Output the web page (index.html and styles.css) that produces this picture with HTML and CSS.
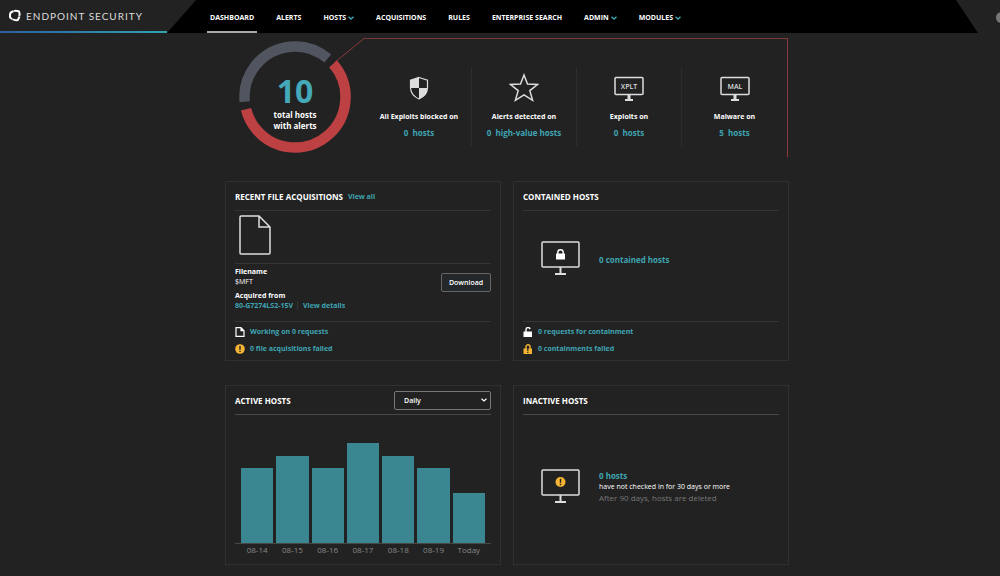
FILE: index.html
```html
<!DOCTYPE html>
<html lang="en">
<head>
  <meta charset="UTF-8" />
  <meta name="viewport" content="width=device-width, initial-scale=1" />
  <title>Endpoint Security - Dashboard</title>
  <link rel="stylesheet" href="styles.css">
</head>
<body>
  <header class="topbar">
    <a href="#" class="brand">
      <svg class="brand-logo" viewBox="0 0 12 13" width="12" height="13">
        <path d="M1.6 3.6 Q5.5 0.6 10 2.4 Q11.6 6.6 8.8 11 Q4 11.8 1.2 8.6 Q0.6 6 1.6 3.6 Z" fill="none" stroke="#fff" stroke-width="2" />
        <path d="M4.2 1 L5.4 3.2 M11.8 7.2 L9.4 7.4 M2.6 11.4 L3.6 9.4" stroke="#222" stroke-width="0.6" />
      </svg>
      <span>ENDPOINT SECURITY</span>
    </a>
    <nav class="menu">
      <a href="#" class="active">DASHBOARD</a>
      <a href="#">ALERTS</a>
      <a href="#">HOSTS <svg class="chevron" viewBox="0 0 6 4"><path d="M0.5 0.8 L3 3 L5.5 0.8" /></svg></a>
      <a href="#">ACQUISITIONS</a>
      <a href="#">RULES</a>
      <a href="#">ENTERPRISE SEARCH</a>
      <a href="#">ADMIN <svg class="chevron" viewBox="0 0 6 4"><path d="M0.5 0.8 L3 3 L5.5 0.8" /></svg></a>
      <a href="#">MODULES <svg class="chevron" viewBox="0 0 6 4"><path d="M0.5 0.8 L3 3 L5.5 0.8" /></svg></a>
    </nav>
    <button type="button" class="user" aria-label="User"></button>
  </header>

  <main>
    <!-- Alert summary -->
    <section class="summary">
      <div class="donut">
        <svg viewBox="0 0 125 119" width="125" height="119">
          <path class="leader" d="M95 25 L125 0.5" />
          <circle class="ring ring-clean" cx="56" cy="59" r="50.5" pathLength="360" stroke-dasharray="136 224" transform="rotate(174.5 56 59)" />
          <circle class="ring ring-alert" cx="56" cy="59" r="50.5" pathLength="360" stroke-dasharray="207 153" transform="rotate(-41 56 59)" />
        </svg>
        <div class="donut-text">
          <strong>10</strong>
          <span>total hosts<br>with alerts</span>
        </div>
      </div>
      <div class="stats">
        <div class="stat">
          <svg class="stat-icon" viewBox="0 0 30 30">
            <path d="M15 4.5 L23.5 7.2 V15 Q23 22.5 15 26 Q7 22.5 6.5 15 V7.2 Z" fill="#222" stroke="#ddd" stroke-width="1.2" />
            <path d="M15 4.5 V15 H6.5 V7.2 Z M15 15 H23.5 Q23 22.5 15 26 Z" fill="#ddd" />
          </svg>
          <h3>All Exploits blocked on</h3>
          <a href="#">0&nbsp; hosts</a>
        </div>
        <div class="stat">
          <svg class="stat-icon" viewBox="0 0 30 30">
            <path class="line" d="M15 2 L18.5 11 L28.5 11.5 L20.8 17.6 L23.6 27.3 L15 21.8 L6.4 27.3 L9.2 17.6 L1.5 11.5 L11.5 11 Z" />
          </svg>
          <h3>Alerts detected on</h3>
          <a href="#">0&nbsp; high-value hosts</a>
        </div>
        <div class="stat">
          <svg class="stat-icon" viewBox="0 0 30 30">
            <rect class="line" x="1" y="4.5" width="28" height="17" rx="1" />
            <path d="M13.5 22 H16.5 V26 H19 V28 H11 V26 H13.5 Z" fill="#ddd" />
            <text x="15" y="15.5">XPLT</text>
          </svg>
          <h3>Exploits on</h3>
          <a href="#">0&nbsp; hosts</a>
        </div>
        <div class="stat">
          <svg class="stat-icon" viewBox="0 0 30 30">
            <rect class="line" x="1" y="4.5" width="28" height="17" rx="1" />
            <path d="M13.5 22 H16.5 V26 H19 V28 H11 V26 H13.5 Z" fill="#ddd" />
            <text x="15" y="15.5">MAL</text>
          </svg>
          <h3>Malware on</h3>
          <a href="#">5&nbsp; hosts</a>
        </div>
      </div>
    </section>

    <section class="cards">
      <article class="card">
        <div class="card-head">
          <h2>RECENT FILE ACQUISITIONS</h2>
          <a href="#">View all</a>
        </div>
        <div class="file">
          <svg viewBox="0 0 32 40" width="32" height="40">
            <path class="line" d="M2 1 H20 L31 12 V38 Q31 39 30 39 H2 Q1 39 1 38 V2 Q1 1 2 1 Z M20 1 V12 H31" />
          </svg>
        </div>
        <div class="file-info">
          <dl>
            <dt>Filename</dt>
            <dd>$MFT</dd>
            <dt>Acquired from</dt>
            <dd class="links"><a href="#">80-G7274LS2-15V</a><a href="#">View details</a></dd>
          </dl>
          <button type="button" class="download">Download</button>
        </div>
        <ul class="status">
          <li>
            <svg viewBox="0 0 10 10"><path d="M1 0.7 H6 L9 3.7 V9.3 H1 Z M6 0.7 V3.7 H9" fill="none" stroke="#fff" stroke-width="1.2" /></svg>
            <a href="#">Working on 0 requests</a>
          </li>
          <li>
            <svg viewBox="0 0 10 10"><circle cx="5" cy="5" r="4.8" fill="#f5b431" /><path d="M5 2 V5.8 M5 6.8 V8" stroke="#222" stroke-width="1.4" /></svg>
            <a href="#">0 file acquisitions failed</a>
          </li>
        </ul>
      </article>

      <article class="card">
        <div class="card-head">
          <h2>CONTAINED HOSTS</h2>
        </div>
        <div class="host-info contained">
          <svg class="monitor" viewBox="0 0 40 36">
            <rect class="line" x="1" y="1" width="37" height="25" rx="1" />
            <path d="M18.5 26 H20.5 V32 H25 V34 H14 V32 H18.5 Z" fill="#ddd" />
            <path d="M16.8 13 V11.5 A2.7 2.7 0 0 1 22.2 11.5 V13" fill="none" stroke="#fff" stroke-width="1.4" />
            <rect x="15" y="12.5" width="9" height="6" rx="0.5" fill="#fff" />
          </svg>
          <a href="#">0 contained hosts</a>
        </div>
        <ul class="status">
          <li>
            <svg viewBox="0 0 10 10"><path d="M3 5 V2.8 A2 2 0 0 1 7 2.2" fill="none" stroke="#fff" stroke-width="1.4" /><rect x="0.5" y="4.5" width="8.5" height="5.5" fill="#fff" /></svg>
            <a href="#">0 requests for containment</a>
          </li>
          <li>
            <svg viewBox="0 0 10 10"><path d="M3 5 V2.8 A2 2 0 0 1 7 2.8 V5" fill="none" stroke="#f5b431" stroke-width="1.4" /><rect x="0.5" y="4.5" width="8.5" height="5.5" fill="#f5b431" /><path d="M4.8 4 V7.2 M4.8 8 V9" stroke="#222" stroke-width="1.2" /></svg>
            <a href="#">0 containments failed</a>
          </li>
        </ul>
      </article>

      <article class="card">
        <div class="card-head solid">
          <h2><label for="period">ACTIVE HOSTS</label></h2>
          <select id="period">
            <option>Daily</option>
            <option>Weekly</option>
            <option>Monthly</option>
          </select>
        </div>
        <div class="chart">
          <div class="bars">
            <div class="bar" style="height: 75%"></div>
            <div class="bar" style="height: 87%"></div>
            <div class="bar" style="height: 75%"></div>
            <div class="bar" style="height: 100%"></div>
            <div class="bar" style="height: 87%"></div>
            <div class="bar" style="height: 75%"></div>
            <div class="bar" style="height: 50%"></div>
          </div>
          <div class="days">
            <span>08-14</span>
            <span>08-15</span>
            <span>08-16</span>
            <span>08-17</span>
            <span>08-18</span>
            <span>08-19</span>
            <span>Today</span>
          </div>
        </div>
      </article>

      <article class="card">
        <div class="card-head solid">
          <h2>INACTIVE HOSTS</h2>
        </div>
        <div class="host-info">
          <svg class="monitor" viewBox="0 0 40 36">
            <rect class="line" x="1" y="1" width="37" height="25" rx="1" />
            <path d="M18.5 26 H20.5 V32 H25 V34 H14 V32 H18.5 Z" fill="#ddd" />
            <circle cx="19.5" cy="13" r="5" fill="#f5b431" />
            <path d="M19.5 9.8 V13.8 M19.5 14.8 V16.2" stroke="#222" stroke-width="1.4" />
          </svg>
          <div>
            <a href="#">0 hosts</a>
            <p>have not checked in for 30 days or more</p>
            <p class="muted">After 90 days, hosts are deleted</p>
          </div>
        </div>
      </article>
    </section>
  </main>
</body>
</html>
```
FILE: styles.css
```css
* {
  margin: 0;
  padding: 0;
  box-sizing: border-box;
}
body {
  font-family: "Open Sans", "Noto Sans", sans-serif;
  font-size: 7px;
  background: #222;
  color: #fff;
  overflow-x: hidden;
}
a {
  color: #3fa5b3;
  font-weight: 700;
  text-decoration: none;
}
svg {
  display: block;
}
.line {
  fill: none;
  stroke: #ddd;
  stroke-width: 1.5;
}

/* Top bar */
.topbar {
  position: relative;
  display: flex;
  height: 33px;
  padding-right: 22px;
  overflow: hidden;
}
.brand {
  display: flex;
  align-items: center;
  gap: 5px;
  width: 167px;
  padding-left: 9px;
  color: #ddd;
  font-family: Lato, sans-serif;
  font-size: 10px;
  font-weight: 400;
  letter-spacing: 1px;
  border-bottom: 2px solid;
  border-image: linear-gradient(to right, #2c5f9e, #30a3b3) 1;
}
.menu {
  flex: 1;
  display: flex;
  gap: 16px;
  padding-left: 40px;
  background: #000;
  clip-path: polygon(29px 0, calc(100% - 22px) 0, 100% 100%, 0 100%);
}
.menu a {
  display: flex;
  align-items: center;
  gap: 2px;
  padding: 4px 3px 0;
  border-bottom: 2px solid transparent;
  color: #fff;
  white-space: nowrap;
}
.menu a.active {
  border-bottom-color: #aaa;
}
.chevron {
  width: 6px;
  height: 4px;
  fill: none;
  stroke: #3fa5b3;
  stroke-width: 1.5;
}
.user {
  position: absolute;
  top: 12px;
  right: -7px;
  width: 11px;
  height: 11px;
  border: none;
  border-radius: 50%;
  background: #777;
}

main {
  max-width: 578px;
  margin: 0 auto;
  padding-left: 14px;
}

/* Summary */
.summary {
  display: flex;
  padding: 5px 1px 0 14px;
}
.donut {
  position: relative;
}
.ring {
  fill: none;
  stroke-width: 10.5;
}
.ring-clean {
  stroke: #50555f;
}
.ring-alert {
  stroke: #bd4043;
}
.leader {
  fill: none;
  stroke: #8a3b39;
}
.donut-text {
  position: absolute;
  top: 34px;
  left: 0;
  width: 112px;
  text-align: center;
}
.donut-text strong {
  display: block;
  color: #44a9b8;
  font-size: 32px;
  line-height: 37px;
}
.donut-text span {
  display: block;
  font-size: 8px;
  font-weight: 700;
  line-height: 11px;
}
.stats {
  flex: 1;
  display: grid;
  grid-template-columns: repeat(4, 1fr);
  padding: 28px 0 11px 3px;
  border-top: 1px solid #7c3836;
  border-right: 1px solid #8a3b39;
}
.stat {
  padding-top: 6px;
  text-align: center;
  border-right: 1px solid #2d2d2d;
}
.stat:last-child {
  border-right: none;
}
.stat-icon {
  width: 30px;
  height: 30px;
  margin: 0 auto 8px;
}
.stat-icon text {
  fill: #ddd;
  font-size: 7px;
  font-weight: 600;
  text-anchor: middle;
}
.stat h3 {
  font-size: 7px;
  line-height: 12px;
  white-space: nowrap;
}
.stat a {
  display: block;
  margin-top: 3px;
  font-size: 8px;
  line-height: 14px;
}

/* Cards */
.cards {
  display: grid;
  grid-template-columns: 1fr 1fr;
  gap: 24px 12px;
  padding: 24px 0 11px;
}
.card {
  display: flex;
  flex-direction: column;
  min-height: 180px;
  padding: 0 9px;
  border: 1px solid #303030;
}
.card-head {
  display: flex;
  align-items: center;
  gap: 5px;
  height: 29px;
  border-bottom: 1px solid #353535;
}
.card-head.solid {
  border-bottom-color: #484848;
}
.card-head h2 {
  font-size: 8px;
}
.card-head select {
  appearance: none;
  width: 97px;
  height: 19px;
  margin-left: auto;
  padding: 0 9px;
  border: 1px solid #777;
  border-radius: 2px;
  background: #222 url("data:image/svg+xml,%3Csvg xmlns='http://www.w3.org/2000/svg' viewBox='0 0 6 4'%3E%3Cpath d='M.5 .8L3 3L5.5 .8' fill='none' stroke='white' stroke-width='1.2'/%3E%3C/svg%3E") no-repeat right 3px center / 6px 4px;
  color: #fff;
  font-family: inherit;
  font-size: 7px;
  font-weight: 600;
}
.file {
  padding: 4px 4px 8px;
  border-bottom: 1px solid #353535;
}
.file-info {
  flex: 1;
  display: flex;
  justify-content: space-between;
  align-items: flex-start;
  padding-top: 3px;
  line-height: 10px;
}
.file-info dt {
  font-weight: 700;
}
.file-info dd + dt {
  margin-top: 4px;
}
.links a + a {
  margin-left: 4px;
  padding-left: 5px;
  border-left: 1px solid #353535;
}
.download {
  width: 50px;
  height: 19px;
  margin-top: 6px;
  border: 1px solid #666;
  border-radius: 2px;
  background: #25282b;
  color: #fff;
  font-family: inherit;
  font-size: 7px;
  font-weight: 600;
}
.status {
  list-style: none;
  padding: 1px 0 3px;
  border-top: 1px solid #353535;
}
.status li {
  display: flex;
  align-items: center;
  gap: 5px;
  height: 17px;
}
.status svg {
  width: 10px;
  height: 10px;
}
.host-info {
  flex: 1;
  display: flex;
  align-items: center;
  gap: 18px;
  padding: 0 0 6px 18px;
}
.host-info.contained {
  padding-bottom: 14px;
}
.monitor {
  width: 40px;
  height: 36px;
}
.host-info a {
  display: block;
  font-size: 8px;
  line-height: 11px;
}
.host-info p {
  line-height: 11px;
}
.host-info .muted {
  color: #777;
  font-size: 8px;
}

/* Chart */
.chart {
  flex: 1;
  display: flex;
  flex-direction: column;
  justify-content: flex-end;
  padding-bottom: 8px;
}
.bars {
  display: flex;
  align-items: flex-end;
  gap: 3px;
  height: 101px;
  padding: 0 6px;
  border-bottom: 1px solid #484848;
}
.bar {
  flex: 1;
  background: #3b8791;
}
.days {
  display: flex;
  gap: 3px;
  padding: 0 6px;
  color: #888;
  font-size: 8px;
  line-height: 12px;
  text-align: center;
}
.days span {
  flex: 1;
}
```
